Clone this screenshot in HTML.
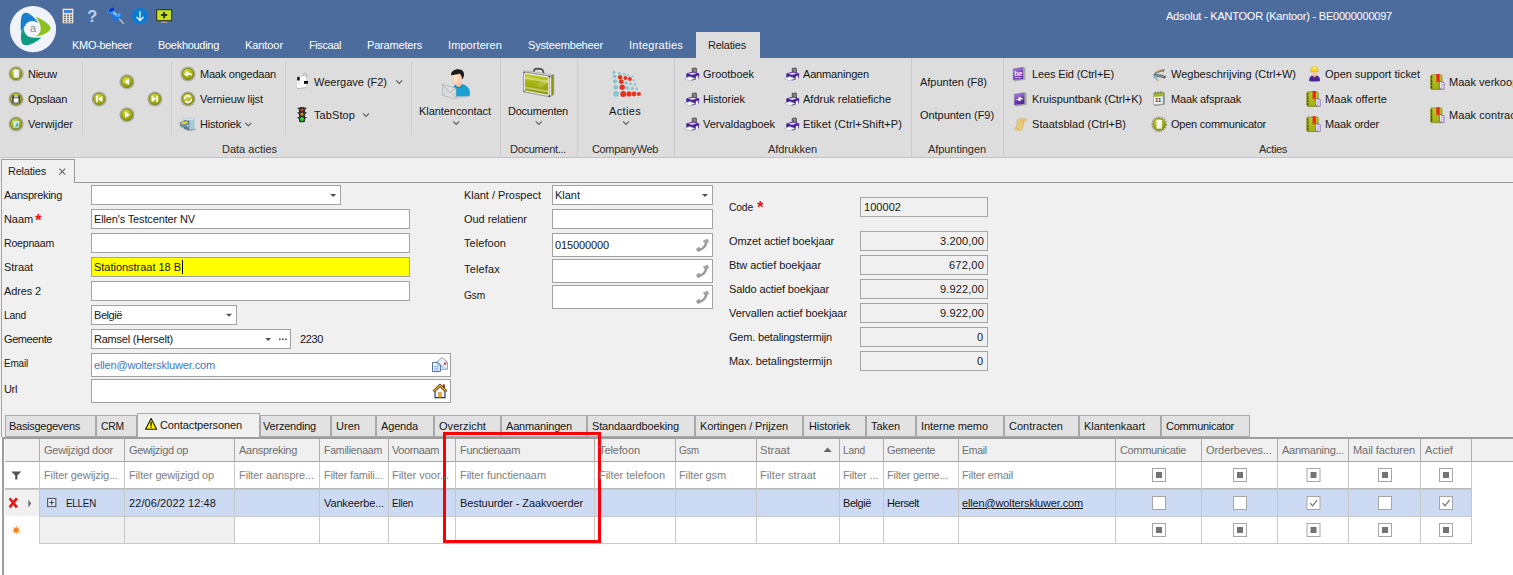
<!DOCTYPE html>
<html><head><meta charset="utf-8"><title>Adsolut</title>
<style>
html,body{margin:0;padding:0;}
body{width:1513px;height:575px;overflow:hidden;position:relative;background:#f0f0f0;font-family:"Liberation Sans", sans-serif;}
.a{position:absolute;}
.t{white-space:pre;}
svg{position:absolute;overflow:visible;}
</style></head><body>
<div class="a" style="left:0px;top:0px;width:1513px;height:58px;background:#4d6c9e;"></div>
<div class="a" style="left:0px;top:58px;width:1513px;height:100px;background:#dddddd;"></div>
<div class="a" style="left:0px;top:157px;width:1513px;height:1px;background:#c4c4c4;"></div>
<div class="a" style="left:696px;top:32px;width:64px;height:26px;background:#dddddd;"></div>
<div class="a" style="left:82px;top:62px;width:1px;height:73px;background:#cdcdcd;"></div>
<div class="a" style="left:171px;top:62px;width:1px;height:73px;background:#cdcdcd;"></div>
<div class="a" style="left:285px;top:62px;width:1px;height:73px;background:#cdcdcd;"></div>
<div class="a" style="left:411px;top:62px;width:1px;height:73px;background:#cdcdcd;"></div>
<div class="a" style="left:500px;top:58px;width:1px;height:99px;background:#cbcbcb;"></div>
<div class="a" style="left:577px;top:58px;width:1px;height:99px;background:#cbcbcb;"></div>
<div class="a" style="left:674px;top:58px;width:1px;height:99px;background:#cbcbcb;"></div>
<div class="a" style="left:911px;top:58px;width:1px;height:99px;background:#cbcbcb;"></div>
<div class="a" style="left:1003px;top:58px;width:1px;height:99px;background:#cbcbcb;"></div>
<div class="a" style="left:0px;top:158px;width:1513px;height:25px;background:#f0f0f0;"></div>
<div class="a" style="left:74px;top:182px;width:1439px;height:1px;background:#9c9c9c;"></div>
<div class="a" style="left:1px;top:159px;width:74px;height:24px;background:#f0f0f0;border:1px solid #9c9c9c;box-sizing:border-box;border-bottom:none;"></div>
<div class="a" style="left:1px;top:182px;width:1px;height:256px;background:#a6a6a6;"></div>
<svg width="10" height="10" style="left:58px;top:167px"><path d="M1.4,1.6 L7.2,7.6 M7.2,1.6 L1.4,7.6" stroke="#666" stroke-width="1.1" fill="none"/></svg>
<div class="a" style="left:91px;top:185px;width:250px;height:20px;background:#fff;border:1px solid #a2a2a2;box-sizing:border-box;"></div>
<div class="a" style="left:91px;top:209px;width:319px;height:20px;background:#fff;border:1px solid #a2a2a2;box-sizing:border-box;"></div>
<div class="a" style="left:91px;top:233px;width:319px;height:20px;background:#fff;border:1px solid #a2a2a2;box-sizing:border-box;"></div>
<div class="a" style="left:91px;top:257px;width:319px;height:20px;background:#ffff00;border:1px solid #a2a2a2;box-sizing:border-box;"></div>
<div class="a" style="left:91px;top:281px;width:319px;height:20px;background:#fff;border:1px solid #a2a2a2;box-sizing:border-box;"></div>
<div class="a" style="left:91px;top:305px;width:146px;height:20px;background:#fff;border:1px solid #a2a2a2;box-sizing:border-box;"></div>
<div class="a" style="left:91px;top:329px;width:200px;height:20px;background:#fff;border:1px solid #a2a2a2;box-sizing:border-box;"></div>
<div class="a" style="left:91px;top:353px;width:360px;height:24px;background:#fff;border:1px solid #a2a2a2;box-sizing:border-box;"></div>
<div class="a" style="left:91px;top:379px;width:360px;height:24px;background:#fff;border:1px solid #a2a2a2;box-sizing:border-box;"></div>
<div class="a" style="left:182px;top:260px;width:1px;height:14px;background:#000;"></div>
<div class="a" style="left:552px;top:185px;width:161px;height:20px;background:#fff;border:1px solid #a2a2a2;box-sizing:border-box;"></div>
<div class="a" style="left:552px;top:209px;width:161px;height:20px;background:#fff;border:1px solid #a2a2a2;box-sizing:border-box;"></div>
<div class="a" style="left:552px;top:233px;width:161px;height:24px;background:#fff;border:1px solid #a2a2a2;box-sizing:border-box;"></div>
<div class="a" style="left:552px;top:259px;width:161px;height:24px;background:#fff;border:1px solid #a2a2a2;box-sizing:border-box;"></div>
<div class="a" style="left:552px;top:285px;width:161px;height:24px;background:#fff;border:1px solid #a2a2a2;box-sizing:border-box;"></div>
<div class="a" style="left:860px;top:197px;width:128px;height:20px;background:#f0f0f0;border:1px solid #a5a5a5;box-sizing:border-box;"></div>
<div class="a" style="left:860px;top:231px;width:128px;height:20px;background:#f0f0f0;border:1px solid #a5a5a5;box-sizing:border-box;"></div>
<div class="a" style="left:860px;top:255px;width:128px;height:20px;background:#f0f0f0;border:1px solid #a5a5a5;box-sizing:border-box;"></div>
<div class="a" style="left:860px;top:279px;width:128px;height:20px;background:#f0f0f0;border:1px solid #a5a5a5;box-sizing:border-box;"></div>
<div class="a" style="left:860px;top:303px;width:128px;height:20px;background:#f0f0f0;border:1px solid #a5a5a5;box-sizing:border-box;"></div>
<div class="a" style="left:860px;top:327px;width:128px;height:20px;background:#f0f0f0;border:1px solid #a5a5a5;box-sizing:border-box;"></div>
<div class="a" style="left:860px;top:351px;width:128px;height:20px;background:#f0f0f0;border:1px solid #a5a5a5;box-sizing:border-box;"></div>
<div class="a" style="left:5px;top:415px;width:91px;height:22px;background:#e2e2e2;border:1px solid #a9a9a9;box-sizing:border-box;"></div>
<div class="a" style="left:96px;top:415px;width:41px;height:22px;background:#e2e2e2;border:1px solid #a9a9a9;box-sizing:border-box;"></div>
<div class="a" style="left:260px;top:415px;width:71px;height:22px;background:#e2e2e2;border:1px solid #a9a9a9;box-sizing:border-box;"></div>
<div class="a" style="left:331px;top:415px;width:45px;height:22px;background:#e2e2e2;border:1px solid #a9a9a9;box-sizing:border-box;"></div>
<div class="a" style="left:376px;top:415px;width:58px;height:22px;background:#e2e2e2;border:1px solid #a9a9a9;box-sizing:border-box;"></div>
<div class="a" style="left:434px;top:415px;width:67px;height:22px;background:#e2e2e2;border:1px solid #a9a9a9;box-sizing:border-box;"></div>
<div class="a" style="left:501px;top:415px;width:86px;height:22px;background:#e2e2e2;border:1px solid #a9a9a9;box-sizing:border-box;"></div>
<div class="a" style="left:587px;top:415px;width:108px;height:22px;background:#e2e2e2;border:1px solid #a9a9a9;box-sizing:border-box;"></div>
<div class="a" style="left:695px;top:415px;width:108px;height:22px;background:#e2e2e2;border:1px solid #a9a9a9;box-sizing:border-box;"></div>
<div class="a" style="left:803px;top:415px;width:63px;height:22px;background:#e2e2e2;border:1px solid #a9a9a9;box-sizing:border-box;"></div>
<div class="a" style="left:866px;top:415px;width:50px;height:22px;background:#e2e2e2;border:1px solid #a9a9a9;box-sizing:border-box;"></div>
<div class="a" style="left:916px;top:415px;width:88px;height:22px;background:#e2e2e2;border:1px solid #a9a9a9;box-sizing:border-box;"></div>
<div class="a" style="left:1004px;top:415px;width:75px;height:22px;background:#e2e2e2;border:1px solid #a9a9a9;box-sizing:border-box;"></div>
<div class="a" style="left:1079px;top:415px;width:82px;height:22px;background:#e2e2e2;border:1px solid #a9a9a9;box-sizing:border-box;"></div>
<div class="a" style="left:1161px;top:415px;width:89px;height:22px;background:#e2e2e2;border:1px solid #a9a9a9;box-sizing:border-box;"></div>
<div class="a" style="left:137px;top:413px;width:123px;height:24px;background:#f0f0f0;border:1px solid #a9a9a9;box-sizing:border-box;border-bottom:none;"></div>
<div class="a" style="left:0px;top:437px;width:1513px;height:138px;background:#ffffff;"></div>
<div class="a" style="left:2px;top:437px;width:1511px;height:2px;background:#9e9e9e;"></div>
<div class="a" style="left:2px;top:437px;width:2.4px;height:138px;background:#9e9e9e;"></div>
<div class="a" style="left:5px;top:439px;width:1508px;height:22px;background:#f0f0f0;"></div>
<div class="a" style="left:5px;top:489px;width:34px;height:27px;background:#f0f0f0;"></div>
<div class="a" style="left:39px;top:489px;width:1432px;height:27px;background:#cddaf4;"></div>
<div class="a" style="left:39px;top:517px;width:195px;height:26px;background:#f0f0f0;"></div>
<div class="a" style="left:5px;top:461px;width:1508px;height:1px;background:#a8a8a8;"></div>
<div class="a" style="left:5px;top:488px;width:1467px;height:1px;background:#b9b9b9;"></div>
<div class="a" style="left:5px;top:489px;width:1467px;height:1px;background:#c9c9c9;"></div>
<div class="a" style="left:39px;top:516px;width:1432px;height:1px;background:#c8c8c8;"></div>
<div class="a" style="left:39px;top:543px;width:1432px;height:1px;background:#c8c8c8;"></div>
<div class="a" style="left:39px;top:439px;width:1px;height:23px;background:#adadad;"></div>
<div class="a" style="left:39px;top:462px;width:1px;height:82px;background:#c8c8c8;"></div>
<div class="a" style="left:124px;top:439px;width:1px;height:23px;background:#adadad;"></div>
<div class="a" style="left:124px;top:462px;width:1px;height:82px;background:#c8c8c8;"></div>
<div class="a" style="left:234px;top:439px;width:1px;height:23px;background:#adadad;"></div>
<div class="a" style="left:234px;top:462px;width:1px;height:82px;background:#c8c8c8;"></div>
<div class="a" style="left:319px;top:439px;width:1px;height:23px;background:#adadad;"></div>
<div class="a" style="left:319px;top:462px;width:1px;height:82px;background:#c8c8c8;"></div>
<div class="a" style="left:388px;top:439px;width:1px;height:23px;background:#adadad;"></div>
<div class="a" style="left:388px;top:462px;width:1px;height:82px;background:#c8c8c8;"></div>
<div class="a" style="left:455px;top:439px;width:1px;height:23px;background:#adadad;"></div>
<div class="a" style="left:455px;top:462px;width:1px;height:82px;background:#c8c8c8;"></div>
<div class="a" style="left:594px;top:439px;width:1px;height:23px;background:#adadad;"></div>
<div class="a" style="left:594px;top:462px;width:1px;height:82px;background:#c8c8c8;"></div>
<div class="a" style="left:675px;top:439px;width:1px;height:23px;background:#adadad;"></div>
<div class="a" style="left:675px;top:462px;width:1px;height:82px;background:#c8c8c8;"></div>
<div class="a" style="left:756px;top:439px;width:1px;height:23px;background:#adadad;"></div>
<div class="a" style="left:756px;top:462px;width:1px;height:82px;background:#c8c8c8;"></div>
<div class="a" style="left:839px;top:439px;width:1px;height:23px;background:#adadad;"></div>
<div class="a" style="left:839px;top:462px;width:1px;height:82px;background:#c8c8c8;"></div>
<div class="a" style="left:883px;top:439px;width:1px;height:23px;background:#adadad;"></div>
<div class="a" style="left:883px;top:462px;width:1px;height:82px;background:#c8c8c8;"></div>
<div class="a" style="left:958px;top:439px;width:1px;height:23px;background:#adadad;"></div>
<div class="a" style="left:958px;top:462px;width:1px;height:82px;background:#c8c8c8;"></div>
<div class="a" style="left:1115px;top:439px;width:1px;height:23px;background:#adadad;"></div>
<div class="a" style="left:1115px;top:462px;width:1px;height:82px;background:#c8c8c8;"></div>
<div class="a" style="left:1201px;top:439px;width:1px;height:23px;background:#adadad;"></div>
<div class="a" style="left:1201px;top:462px;width:1px;height:82px;background:#c8c8c8;"></div>
<div class="a" style="left:1277px;top:439px;width:1px;height:23px;background:#adadad;"></div>
<div class="a" style="left:1277px;top:462px;width:1px;height:82px;background:#c8c8c8;"></div>
<div class="a" style="left:1348px;top:439px;width:1px;height:23px;background:#adadad;"></div>
<div class="a" style="left:1348px;top:462px;width:1px;height:82px;background:#c8c8c8;"></div>
<div class="a" style="left:1420px;top:439px;width:1px;height:23px;background:#adadad;"></div>
<div class="a" style="left:1420px;top:462px;width:1px;height:82px;background:#c8c8c8;"></div>
<div class="a" style="left:1471px;top:439px;width:1px;height:23px;background:#adadad;"></div>
<div class="a" style="left:1471px;top:462px;width:1px;height:82px;background:#c8c8c8;"></div>
<div class="a" style="left:443px;top:432px;width:158px;height:111px;background:transparent;border:3px solid #fa0008;box-sizing:border-box;"></div>
<svg width="1513" height="575" style="left:0;top:0"><defs>
<radialGradient id="ol" cx="40%" cy="30%" r="75%"><stop offset="0" stop-color="#d4dc3a"/><stop offset="0.55" stop-color="#a9b414"/><stop offset="1" stop-color="#7f8a0c"/></radialGradient>
<linearGradient id="pg" x1="0" y1="0" x2="1" y2="1"><stop offset="0" stop-color="#ffffff"/><stop offset="1" stop-color="#dfe6f5"/></linearGradient>
<linearGradient id="bk" x1="0" y1="0" x2="0" y2="1"><stop offset="0" stop-color="#bccb24"/><stop offset="1" stop-color="#9fae14"/></linearGradient>
<linearGradient id="pu" x1="0" y1="0" x2="1" y2="1"><stop offset="0" stop-color="#8a4fd0"/><stop offset="1" stop-color="#4f1f94"/></linearGradient>
<linearGradient id="bc" x1="0" y1="0" x2="0" y2="1"><stop offset="0" stop-color="#c3cf2a"/><stop offset="0.5" stop-color="#a4b012"/><stop offset="1" stop-color="#8d990c"/></linearGradient>
</defs><circle cx="33" cy="29.1" r="23.1" fill="#f0f3fa"/>
<path d="M20.9,31.4 C20.6,25 20.6,18.6 21.9,15.4 C22.9,13 25,12.3 27,12.8 C31,14.2 35.6,18.6 38.2,22.9 C36.4,21.6 34.6,20.9 32.6,20.9 C28.4,21 25.6,23.6 24,27.4 C23,29 22,30.4 20.9,31.4 Z" fill="#177fcb"/>
<path d="M35.6,16.8 C40.8,18.6 47.4,22.6 50,26.2 C51,27.6 50.8,29.4 49.4,30.8 C46.4,33.6 41,35.8 35.7,36.7 C38.6,35 40.6,32.2 40.7,28.8 C40.8,25.4 39.6,23 38.4,21.2 C37.6,19.6 36.6,18 35.6,16.8 Z" fill="#8dc11f"/>
<path d="M24.1,27.8 C23.6,31.8 25.6,35.4 29.2,36.8 C32.6,38 37.4,37.9 41.6,37.4 C37.4,41 31.6,44.4 26.8,45.2 C24.4,45.5 22.4,44.4 21.6,42 C20.6,38.6 20.8,34 21.4,31.6 C22.4,30.4 23.4,29.2 24.1,27.8 Z" fill="#0c9a80"/>
<text x="33" y="32" font-size="11" fill="#8c8c8c" text-anchor="middle" font-family="Liberation Sans, sans-serif">a</text><rect x="62.5" y="8.5" width="11" height="15" rx="1" fill="#e6e6e2" stroke="#8c8c8c"/>
<rect x="64" y="10" width="8" height="3" fill="#3f82e0"/><rect x="64" y="14.5" width="2" height="1.3" fill="#6e6e6e"/><rect x="67" y="14.5" width="2" height="1.3" fill="#6e6e6e"/><rect x="70" y="14.5" width="2" height="1.3" fill="#e03a2a"/><rect x="64" y="16.7" width="2" height="1.3" fill="#6e6e6e"/><rect x="67" y="16.7" width="2" height="1.3" fill="#6e6e6e"/><rect x="70" y="16.7" width="2" height="1.3" fill="#6e6e6e"/><rect x="64" y="18.9" width="2" height="1.3" fill="#6e6e6e"/><rect x="67" y="18.9" width="2" height="1.3" fill="#6e6e6e"/><rect x="70" y="18.9" width="2" height="1.3" fill="#6e6e6e"/><rect x="64" y="21.1" width="2" height="1.3" fill="#6e6e6e"/><rect x="67" y="21.1" width="2" height="1.3" fill="#6e6e6e"/><rect x="70" y="21.1" width="2" height="1.3" fill="#6e6e6e"/><text x="92.3" y="21.6" font-size="16.5" font-weight="bold" fill="#b3d3f8" text-anchor="middle" font-family="Liberation Sans, sans-serif">?</text><line x1="118.8" y1="18.2" x2="123.7" y2="23.7" stroke="#c4c4c4" stroke-width="1.3"/>
<ellipse cx="116.7" cy="16.8" rx="4.7" ry="3" fill="#1274ec" transform="rotate(-35 116.7 16.8)"/>
<ellipse cx="118.4" cy="15.2" rx="2.4" ry="1.6" fill="#4fb0ff" transform="rotate(-35 118.4 15.2)"/>
<path d="M110.2,12.4 L112.8,9.6 L118.2,14.6 L115.4,17.2 Z" fill="#2a8cf8"/>
<line x1="113" y1="11.6" x2="116.4" y2="15" stroke="#d6ecff" stroke-width="1.1"/>
<ellipse cx="111.1" cy="10.6" rx="3.6" ry="2.5" fill="#2f8ef6" transform="rotate(-33 111.1 10.6)"/>
<ellipse cx="111.5" cy="9.8" rx="3" ry="1.7" fill="#0d37c4" transform="rotate(-33 111.5 9.8)"/><circle cx="140" cy="16" r="8.1" fill="#0b7bd3"/>
<path d="M140,11.2 V20.4 M136.4,16.9 L140,20.6 L143.6,16.9" fill="none" stroke="#fff" stroke-width="1.25"/><rect x="156.6" y="9.6" width="15" height="11" fill="#c4e31d" stroke="#3a3f16" stroke-width="1.2"/>
<path d="M164.1,12 V18.2 M161,15.1 H167.2" stroke="#2e3210" stroke-width="2"/>
<rect x="161" y="21.6" width="6.4" height="1.4" fill="#9d9d9d"/><g transform="translate(16.1,73.8)"><circle r="7.8" fill="#c9c9c4"/><circle r="7.3" fill="#a4a49c"/><circle r="6.6" fill="#c3c3ba"/><circle r="5.8" fill="url(#ol)" stroke="#77810c" stroke-width="0.8"/><path d="M-2.4,-4.2 H2.8 V4 H-2.4 Z" fill="url(#pg)"/></g><g transform="translate(16.1,99.2)"><circle r="7.8" fill="#c9c9c4"/><circle r="7.3" fill="#a4a49c"/><circle r="6.6" fill="#c3c3ba"/><circle r="5.8" fill="url(#ol)" stroke="#77810c" stroke-width="0.8"/><rect x="-4" y="-4" width="8" height="8" rx="0.8" fill="#4a4a42"/><rect x="-2.4" y="-1" width="4.8" height="4.4" fill="#f4f4f4"/><rect x="-2" y="-4" width="4" height="2.2" fill="#cfcfcf"/></g><g transform="translate(16.1,124)"><circle r="7.8" fill="#c9c9c4"/><circle r="7.3" fill="#a4a49c"/><circle r="6.6" fill="#c3c3ba"/><circle r="5.8" fill="url(#ol)" stroke="#77810c" stroke-width="0.8"/><path d="M-3.2,-3 H3.2 L2.4,3.8 H-2.4 Z" fill="#cfe8f8" stroke="#8fc0e0" stroke-width="0.5"/><path d="M-0.6,2.4 L1.2,-0.6 L1.8,2 Z M0,0 L1.6,-1.4" fill="#3bb04a" stroke="#3bb04a" stroke-width="0.5"/></g><g transform="translate(127,81.8)"><circle r="7.8" fill="#c9c9c4"/><circle r="7.3" fill="#a4a49c"/><circle r="6.6" fill="#c3c3ba"/><circle r="5.8" fill="url(#ol)" stroke="#77810c" stroke-width="0.8"/><path d="M2,-3.2 V3.2 L-3,0 Z" fill="#fff"/></g><g transform="translate(99.2,99)"><circle r="7.8" fill="#c9c9c4"/><circle r="7.3" fill="#a4a49c"/><circle r="6.6" fill="#c3c3ba"/><circle r="5.8" fill="url(#ol)" stroke="#77810c" stroke-width="0.8"/><path d="M3.2,-3.2 V3.2 L-1.2,0 Z M-3.2,-3.2 H-1.4 V3.2 H-3.2 Z" fill="#fff"/></g><g transform="translate(154.9,99)"><circle r="7.8" fill="#c9c9c4"/><circle r="7.3" fill="#a4a49c"/><circle r="6.6" fill="#c3c3ba"/><circle r="5.8" fill="url(#ol)" stroke="#77810c" stroke-width="0.8"/><path d="M-3.2,-3.2 V3.2 L1.2,0 Z M3.2,-3.2 H1.4 V3.2 H3.2 Z" fill="#fff"/></g><g transform="translate(127,114.8)"><circle r="7.8" fill="#c9c9c4"/><circle r="7.3" fill="#a4a49c"/><circle r="6.6" fill="#c3c3ba"/><circle r="5.8" fill="url(#ol)" stroke="#77810c" stroke-width="0.8"/><path d="M-2,-3.2 V3.2 L3,0 Z" fill="#fff"/></g><g transform="translate(188,74)"><circle r="7.8" fill="#c9c9c4"/><circle r="7.3" fill="#a4a49c"/><circle r="6.6" fill="#c3c3ba"/><circle r="5.8" fill="url(#ol)" stroke="#77810c" stroke-width="0.8"/><path d="M-4,0.4 L-1,-3.2 L-0.6,-1.4 C2.4,-1.8 4.2,-0.2 4.2,2.2 C3,0.8 1.6,0.6 -0.4,0.8 L0,2.6 Z" fill="#fff"/></g><g transform="translate(188,99)"><circle r="7.8" fill="#c9c9c4"/><circle r="7.3" fill="#a4a49c"/><circle r="6.6" fill="#c3c3ba"/><circle r="5.8" fill="url(#ol)" stroke="#77810c" stroke-width="0.8"/><path d="M-3.4,0.4 A3.4,3.4 0 0 1 1.6,-3" fill="none" stroke="#fff" stroke-width="1.5"/><path d="M0.6,-4.6 L3.6,-2.4 L0.4,-1 Z" fill="#fff"/><path d="M3.4,-0.4 A3.4,3.4 0 0 1 -1.6,3" fill="none" stroke="#fff" stroke-width="1.5"/><path d="M-0.6,4.6 L-3.6,2.4 L-0.4,1 Z" fill="#fff"/></g><g transform="translate(176,112)">
<path d="M7.6,6.8 L12.4,6 L18.6,6.8 L18.6,8 L13.4,8.8 L7.6,8 Z" fill="#cfe5ec" stroke="#9fbfcb" stroke-width="0.4"/>
<path d="M13.4,8.6 L18.6,7.6 L18.6,17 L13.4,18.2 Z" fill="#a6c9d6"/>
<path d="M7.6,8 L13.4,8.8 L13.4,18.2 L7.6,16.4 Z" fill="#5d7e8e"/>
<path d="M4.2,10.2 L11,9.4 L12.6,10.6 L12.6,14.4 L5.8,15.2 L4.2,14 Z" fill="#86a7b6" stroke="#4c6c7b" stroke-width="0.5"/>
<path d="M5.6,9.9 L10.9,9.3 L11.5,11.5 L6.2,12.1 Z" fill="#f3d936" stroke="#c7ab1c" stroke-width="0.3"/>
<path d="M5.8,12.4 L12.6,11.6 L12.6,14.4 L5.8,15.2 Z" fill="#6f909f"/>
<rect x="11" y="13.2" width="1.6" height="1.3" fill="#e9f1f5"/>
<path d="M8.4,17 L13.4,18.6 L19.6,17.2" fill="none" stroke="#6a7a82" stroke-width="0.7"/>
</g><g transform="translate(292,70)">
<path d="M10.8,6.4 C10.4,3.4 12.6,2.6 14.2,3.4 C15.2,4 15.2,5.4 15,7.4 Z" fill="#d0d0d0" stroke="#a8a8a8" stroke-width="0.6"/>
<path d="M5,7.2 L13,5.8 L14.6,7.2 L14.6,11 L16.4,10.8 L16.4,14.4 L14.4,14.8 L14,17.6 L6,18.6 L4.4,17.6 Z" fill="#fcfcfc" stroke="#c6c6c6" stroke-width="0.5"/>
<path d="M4.4,17.6 L6,18.6 L14,17.6" fill="none" stroke="#a9a9a9" stroke-width="0.7"/>
<ellipse cx="6.5" cy="8.8" rx="1.5" ry="2" fill="#0e0e0e"/>
<path d="M7.2,7 C8.2,7.6 8.2,10 7.2,10.6 Z" fill="#1f9a2e"/>
<rect x="12" y="11" width="4" height="2.8" fill="#090909"/>
<path d="M7.4,12 V14" stroke="#c9c9c9" stroke-width="0.6"/>
</g><g transform="translate(302,114.5)">
<path d="M-5,-6.8 L-2.6,-6.8 L-2.6,-4.2 Z M5,-6.8 L2.6,-6.8 L2.6,-4.2 Z M-5,-2.2 L-2.6,-2.2 L-2.6,0.4 Z M5,-2.2 L2.6,-2.2 L2.6,0.4 Z M-5,2.4 L-2.6,2.4 L-2.6,5 Z M5,2.4 L2.6,2.4 L2.6,5 Z" fill="#2c2c2c"/>
<rect x="-3" y="-7.6" width="6" height="15.4" rx="1.6" fill="#303030"/>
<circle cx="0" cy="-4.6" r="1.45" fill="#cf3a1c"/><circle cx="0" cy="-0.2" r="1.45" fill="#dc8f0f"/><circle cx="0" cy="4.5" r="1.9" fill="#21e626"/>
</g><path d="M245.3,122.8 L248.3,125.89999999999999 L251.3,122.8" fill="none" stroke="#5f5f5f" stroke-width="1.2"/><path d="M396.2,80.3 L399.2,83.39999999999999 L402.2,80.3" fill="none" stroke="#5f5f5f" stroke-width="1.2"/><path d="M363,113.3 L366,116.39999999999999 L369,113.3" fill="none" stroke="#5f5f5f" stroke-width="1.2"/><path d="M453.2,121.3 L456.2,124.39999999999999 L459.2,121.3" fill="none" stroke="#5f5f5f" stroke-width="1.2"/><path d="M535.8,121.3 L538.8,124.39999999999999 L541.8,121.3" fill="none" stroke="#5f5f5f" stroke-width="1.2"/><path d="M623,121.3 L626,124.39999999999999 L629,121.3" fill="none" stroke="#5f5f5f" stroke-width="1.2"/><g transform="translate(436,64)">
<ellipse cx="24" cy="32.6" rx="10" ry="1.1" fill="#c3c7ca"/>
<path d="M15,32.2 C14.8,26 17,22 20,20.8 L26.4,20.2 C31,21 34.2,24.6 34,30 C34,31.4 33,32.2 31,32.3 Z" fill="#1aa1d2"/>
<path d="M19.4,20.6 C20.4,23.8 24.6,24 26.2,20.2 L25,17.4 L20,17.4 Z" fill="#f2bc96"/>
<path d="M19,20.9 C20.2,24.8 25.2,24.8 26.6,20.4" fill="none" stroke="#1b6e8c" stroke-width="0.8"/>
<ellipse cx="20.9" cy="14.8" rx="4.9" ry="5.8" fill="#f9cdae"/>
<ellipse cx="19.6" cy="14" rx="2.4" ry="3.8" fill="#fde0ca"/>
<path d="M15.2,11.2 C14.6,7.6 18,5.2 22.2,5.2 C26.6,5.2 28.6,8 27.9,11.8 C27.6,13.6 26.8,15 25.9,15.4 C26.2,13 25.4,10.8 23.4,9.4 C21,10.4 17.8,10.8 15.2,11.2 Z" fill="#1b1b1b"/>
<path d="M6.6,20.4 L20,24 L20,34.8 L6.6,31.4 Z" fill="#dcdee0" stroke="#a2a6aa" stroke-width="0.6"/>
<path d="M6.6,20.4 L13.8,28.6 L20,24" fill="none" stroke="#9ea2a6" stroke-width="0.7"/>
<path d="M6.6,31.4 L12,26.6 M20,34.8 L15.4,27.6" fill="none" stroke="#b4b8bc" stroke-width="0.6"/>
</g><g transform="translate(518,64)">
<path d="M15.6,9 C15.6,5.6 17,4.7 19,4.7 L22.4,4.9 C24.6,5.1 25.4,6.8 25.6,9.6" fill="none" stroke="#4c4c4c" stroke-width="1.7"/>
<path d="M5.6,7.9 L9.6,6.8 L35.7,10.9 L31.7,12.2 Z" fill="#dedede" stroke="#8a8a8a" stroke-width="0.5"/>
<path d="M31.7,12.2 L35.7,10.9 L35.7,30.4 L31.7,32.7 Z" fill="#8b970c" stroke="#7e7e7e" stroke-width="0.6"/>
<path d="M5.6,7.9 L31.7,12.2 L31.7,32.7 L5.6,27.8 Z" fill="#f0f0f0" stroke="#7e7e7e" stroke-width="0.8"/>
<path d="M7,9.8 L30.2,13.6 L30.2,30.8 L7,26.4 Z" fill="url(#bc)"/>
<path d="M7,12.8 L30.2,16.8 L30.2,18.8 L7,14.8 Z M7,22.4 L30.2,26.6 L30.2,28.6 L7,24.4 Z" fill="#ffffff" fill-opacity="0.38"/>
<path d="M18,20 L30.2,15 L30.2,18 L22,24 Z" fill="#ffffff" fill-opacity="0.18"/>
<path d="M31.7,12.2 L33.2,11.7 L33.2,31.9 L31.7,32.7 Z" fill="#e6e6e6"/>
<circle cx="31.5" cy="12.7" r="0.9" fill="#333"/><circle cx="31.5" cy="32" r="0.9" fill="#333"/><circle cx="6.1" cy="8.5" r="0.7" fill="#444"/><circle cx="6.1" cy="27.3" r="0.7" fill="#444"/>
</g><circle cx="613.8" cy="72.3" r="1.6" fill="#86c5d0"/><circle cx="619.3" cy="73.4" r="1.4" fill="#86c5d0"/><circle cx="624.3" cy="74.3" r="1.2" fill="#86c5d0"/><circle cx="628.2" cy="75.4" r="1.1" fill="#86c5d0"/><circle cx="632.3" cy="76.3" r="1.0" fill="#86c5d0"/><circle cx="614.6" cy="76.5" r="1.8" fill="#86c5d0"/><circle cx="620.1" cy="77.3" r="2.2" fill="#e8321f"/><circle cx="625.4" cy="78" r="2.0" fill="#e8321f"/><circle cx="629.9" cy="79.1" r="2.0" fill="#e8321f"/><circle cx="633.7" cy="80.3" r="1.1" fill="#86c5d0"/><circle cx="615.1" cy="81.3" r="2.1" fill="#86c5d0"/><circle cx="621.3" cy="81.6" r="2.4" fill="#e8321f"/><circle cx="626" cy="83" r="1.7" fill="#86c5d0"/><circle cx="630.5" cy="83.7" r="1.5" fill="#86c5d0"/><circle cx="635.1" cy="84.5" r="1.3" fill="#86c5d0"/><circle cx="615.7" cy="87.3" r="2.4" fill="#86c5d0"/><circle cx="622.2" cy="87.3" r="2.7" fill="#e8321f"/><circle cx="627.3" cy="87.9" r="1.9" fill="#86c5d0"/><circle cx="632.3" cy="88.4" r="1.6" fill="#86c5d0"/><circle cx="636.7" cy="89" r="1.4" fill="#86c5d0"/><circle cx="616.1" cy="93.9" r="2.8" fill="#86c5d0"/><circle cx="623.2" cy="93.9" r="3.0" fill="#e8321f"/><circle cx="629" cy="93.9" r="2.6" fill="#e8321f"/><circle cx="634" cy="94" r="2.4" fill="#e8321f"/><circle cx="638.9" cy="94" r="2.1" fill="#e8321f"/><g transform="translate(683.8,68)">
<path d="M8.4,0.4 L12.4,0 L12.6,5 L8.6,5.6 Z" fill="#a9a9a9" stroke="#2e2e2e" stroke-width="0.8"/><path d="M9.7,1.4 V4.6 M11.1,1.2 V4.4" stroke="#444" stroke-width="0.6"/>
<path d="M2.6,5.4 L9.4,3.8 L15.4,5.6 L15.2,10.2 L8.6,12.6 L2.4,10.2 Z" fill="#43208e"/>
<path d="M2.6,5.4 L9.4,3.8 L15.4,5.6 L8.8,7.6 Z" fill="#6a3fb8"/>
<path d="M4.6,5.8 L9.6,4.8 L12.6,5.6 L8.2,6.8 Z" fill="#efefef"/>
<path d="M0.4,10.4 L6,8.6 L11.4,10.6 L5.6,12.8 Z" fill="#f6f8f8" stroke="#9fb0b0" stroke-width="0.6"/>
<path d="M12,8.2 L14.4,7.4 L14.4,11 L12,11.8 Z" fill="#f1f1f1"/>
</g><g transform="translate(783.8,68)">
<path d="M8.4,0.4 L12.4,0 L12.6,5 L8.6,5.6 Z" fill="#a9a9a9" stroke="#2e2e2e" stroke-width="0.8"/><path d="M9.7,1.4 V4.6 M11.1,1.2 V4.4" stroke="#444" stroke-width="0.6"/>
<path d="M2.6,5.4 L9.4,3.8 L15.4,5.6 L15.2,10.2 L8.6,12.6 L2.4,10.2 Z" fill="#43208e"/>
<path d="M2.6,5.4 L9.4,3.8 L15.4,5.6 L8.8,7.6 Z" fill="#6a3fb8"/>
<path d="M4.6,5.8 L9.6,4.8 L12.6,5.6 L8.2,6.8 Z" fill="#efefef"/>
<path d="M0.4,10.4 L6,8.6 L11.4,10.6 L5.6,12.8 Z" fill="#f6f8f8" stroke="#9fb0b0" stroke-width="0.6"/>
<path d="M12,8.2 L14.4,7.4 L14.4,11 L12,11.8 Z" fill="#f1f1f1"/>
</g><g transform="translate(683.8,93)">
<path d="M8.4,0.4 L12.4,0 L12.6,5 L8.6,5.6 Z" fill="#a9a9a9" stroke="#2e2e2e" stroke-width="0.8"/><path d="M9.7,1.4 V4.6 M11.1,1.2 V4.4" stroke="#444" stroke-width="0.6"/>
<path d="M2.6,5.4 L9.4,3.8 L15.4,5.6 L15.2,10.2 L8.6,12.6 L2.4,10.2 Z" fill="#43208e"/>
<path d="M2.6,5.4 L9.4,3.8 L15.4,5.6 L8.8,7.6 Z" fill="#6a3fb8"/>
<path d="M4.6,5.8 L9.6,4.8 L12.6,5.6 L8.2,6.8 Z" fill="#efefef"/>
<path d="M0.4,10.4 L6,8.6 L11.4,10.6 L5.6,12.8 Z" fill="#f6f8f8" stroke="#9fb0b0" stroke-width="0.6"/>
<path d="M12,8.2 L14.4,7.4 L14.4,11 L12,11.8 Z" fill="#f1f1f1"/>
</g><g transform="translate(783.8,93)">
<path d="M8.4,0.4 L12.4,0 L12.6,5 L8.6,5.6 Z" fill="#a9a9a9" stroke="#2e2e2e" stroke-width="0.8"/><path d="M9.7,1.4 V4.6 M11.1,1.2 V4.4" stroke="#444" stroke-width="0.6"/>
<path d="M2.6,5.4 L9.4,3.8 L15.4,5.6 L15.2,10.2 L8.6,12.6 L2.4,10.2 Z" fill="#43208e"/>
<path d="M2.6,5.4 L9.4,3.8 L15.4,5.6 L8.8,7.6 Z" fill="#6a3fb8"/>
<path d="M4.6,5.8 L9.6,4.8 L12.6,5.6 L8.2,6.8 Z" fill="#efefef"/>
<path d="M0.4,10.4 L6,8.6 L11.4,10.6 L5.6,12.8 Z" fill="#f6f8f8" stroke="#9fb0b0" stroke-width="0.6"/>
<path d="M12,8.2 L14.4,7.4 L14.4,11 L12,11.8 Z" fill="#f1f1f1"/>
</g><g transform="translate(683.8,118)">
<path d="M8.4,0.4 L12.4,0 L12.6,5 L8.6,5.6 Z" fill="#a9a9a9" stroke="#2e2e2e" stroke-width="0.8"/><path d="M9.7,1.4 V4.6 M11.1,1.2 V4.4" stroke="#444" stroke-width="0.6"/>
<path d="M2.6,5.4 L9.4,3.8 L15.4,5.6 L15.2,10.2 L8.6,12.6 L2.4,10.2 Z" fill="#43208e"/>
<path d="M2.6,5.4 L9.4,3.8 L15.4,5.6 L8.8,7.6 Z" fill="#6a3fb8"/>
<path d="M4.6,5.8 L9.6,4.8 L12.6,5.6 L8.2,6.8 Z" fill="#efefef"/>
<path d="M0.4,10.4 L6,8.6 L11.4,10.6 L5.6,12.8 Z" fill="#f6f8f8" stroke="#9fb0b0" stroke-width="0.6"/>
<path d="M12,8.2 L14.4,7.4 L14.4,11 L12,11.8 Z" fill="#f1f1f1"/>
</g><g transform="translate(783.8,118)">
<path d="M8.4,0.4 L12.4,0 L12.6,5 L8.6,5.6 Z" fill="#a9a9a9" stroke="#2e2e2e" stroke-width="0.8"/><path d="M9.7,1.4 V4.6 M11.1,1.2 V4.4" stroke="#444" stroke-width="0.6"/>
<path d="M2.6,5.4 L9.4,3.8 L15.4,5.6 L15.2,10.2 L8.6,12.6 L2.4,10.2 Z" fill="#43208e"/>
<path d="M2.6,5.4 L9.4,3.8 L15.4,5.6 L8.8,7.6 Z" fill="#6a3fb8"/>
<path d="M4.6,5.8 L9.6,4.8 L12.6,5.6 L8.2,6.8 Z" fill="#efefef"/>
<path d="M0.4,10.4 L6,8.6 L11.4,10.6 L5.6,12.8 Z" fill="#f6f8f8" stroke="#9fb0b0" stroke-width="0.6"/>
<path d="M12,8.2 L14.4,7.4 L14.4,11 L12,11.8 Z" fill="#f1f1f1"/>
</g><g transform="translate(1012.5,66.6)">
<path d="M0.2,1.8 L10.6,0.1 L12.9,1.3 L12.9,13.2 L2.6,14.8 L0.2,13.4 Z" fill="#a5ada6"/>
<path d="M0.9,2.3 L10.6,0.9 L10.6,12.3 L0.9,13.1 Z" fill="url(#pu)"/>
<path d="M0.9,2.3 L10.6,0.9 L10.6,4.6 L0.9,6 Z" fill="#fff" fill-opacity="0.2"/>
<text x="5.7" y="9.9" font-size="7.6" font-weight="bold" fill="#fff" text-anchor="middle" font-family="Liberation Sans, sans-serif" letter-spacing="-0.4">be</text>
<path d="M2.4,11.1 H9.2" stroke="#fff" stroke-width="0.8"/>
</g><g transform="translate(1013.6,92)">
<path d="M0.2,1.8 L10.8,0.1 L13.1,1.3 L13.1,13 L2.6,14.5 L0.2,13.2 Z" fill="#a5ada6"/>
<path d="M0.9,2.3 L10.8,0.9 L10.8,12.1 L0.9,12.9 Z" fill="url(#pu)"/>
<path d="M0.9,2.3 L10.8,0.9 L10.8,4.6 L0.9,6 Z" fill="#fff" fill-opacity="0.2"/>
<path d="M2.2,6.9 H4.6 V5.2 H7.4 V6.1 H9.4 V7.3 H7.4 V8.8 H4.6 V7.7 H2.2 Z" fill="#fff"/>
</g><g transform="translate(1013.8,118)">
<path d="M3.6,1.7 C6,0.5 10,0.2 12.4,1.2 C13.3,1.8 13,3 11.8,3.2 L10.3,3.2 L8.7,10.6 C8.3,12 6.4,12.6 4.4,12.4 C2.6,12.2 0.8,11.6 0.4,10.4 C0.6,9.6 1.6,9.4 2.7,9.6 Z" fill="#edcb7e" stroke="#c6a24e" stroke-width="0.5"/>
<path d="M10.3,3.2 C9.2,3.1 8.4,2.6 8,1.8" fill="none" stroke="#c6a24e" stroke-width="0.5"/>
<path d="M2.7,9.6 C3.8,10 4.4,10.8 4.4,12.3" fill="none" stroke="#c6a24e" stroke-width="0.5"/>
<path d="M5.2,3.4 L8.8,3.4 M4.8,5.4 L8.4,5.4 M4.4,7.4 L8,7.4" stroke="#d9b866" stroke-width="0.5"/>
</g><g>
<path d="M1164,70.4 C1158.6,70.8 1154.6,73.2 1154.2,76.2" fill="none" stroke="#7a8084" stroke-width="2.4"/>
<path d="M1154.2,76 C1158,75.2 1162,75.8 1165.4,77.6" fill="none" stroke="#5a5f63" stroke-width="2.6"/>
<path d="M1155,76 C1158,75.4 1162,76 1165,77.4" fill="none" stroke="#c9cdd0" stroke-width="0.6"/>
<path d="M1163.4,69.6 C1160.6,69.8 1158.4,70.6 1156.6,72.2" fill="none" stroke="#e9a63a" stroke-width="1"/>
<circle cx="1155.4" cy="77.2" r="1.7" fill="#78bdea"/>
<path d="M1155.6,78.4 L1158.2,80.8" stroke="#c79044" stroke-width="1.1"/>
<path d="M1163,70.8 L1164.6,69.6 M1164,77 L1165.6,76.4" stroke="#33383c" stroke-width="0.8"/>
</g><g transform="translate(1153,91.3)">
<path d="M0.6,1.6 L10,0.4 L11.8,1.6 L11.8,13.4 L2.4,14.8 L0.6,13.4 Z" fill="#8f958f"/>
<path d="M0.6,1.6 L10,0.6 L10,12.6 L0.6,13.4 Z" fill="#f7f7f3" stroke="#8a8f8a" stroke-width="0.5"/>
<path d="M0.8,1.8 L9.8,0.8 L9.8,5 L0.8,5.8 Z" fill="#9cb232"/>
<path d="M2.4,0.2 V2.6 M5.2,0 V2.4 M8,0 V2.2" stroke="#566" stroke-width="0.8"/>
<text x="5.2" y="11.2" font-size="6" font-weight="bold" fill="#222" text-anchor="middle" font-family="Liberation Sans, sans-serif">11</text>
</g><g transform="translate(1159.2,124.3)"><circle r="7.3" fill="none" stroke="#8a8f7a" stroke-width="1.1" stroke-dasharray="1.6 1.2"/><circle r="6.2" fill="url(#ol)" stroke="#77810c" stroke-width="0.8"/><path d="M-2.6,-4.4 H2.8 V4.4 H-2.6 Z" fill="url(#pg)"/></g><g transform="translate(1308.5,66)">
<path d="M0.6,15 C0.4,11.6 2,9.8 4,9.4 L8,9.4 C10,9.8 11.8,11.6 11.6,15 C8.2,15.8 3.8,15.8 0.6,15 Z" fill="#4c2496"/>
<path d="M4,9.4 L6,11.4 L8,9.4 Z" fill="#f0c8a4"/>
<ellipse cx="6" cy="7" rx="2.6" ry="3" fill="#f4c9a2"/>
<path d="M2.2,5 C2.2,1.8 3.8,0.4 6,0.4 C8.2,0.4 9.6,1.8 9.6,5 L10.4,5.6 L1.4,5.6 Z" fill="#f7d41e" stroke="#c9a40e" stroke-width="0.4"/>
<path d="M4.6,1 C5.4,0.6 6.6,0.6 7.4,1 L7.2,3.8 L4.8,3.8 Z" fill="#fbe56a"/>
</g><g transform="translate(1306.4,91)">
<rect x="0.4" y="0.8" width="11.4" height="14.6" rx="1.4" fill="url(#bk)" stroke="#75800e" stroke-width="0.7"/>
<path d="M1.5,2 V14.4" stroke="#3c4014" stroke-width="1.1" stroke-dasharray="2.6 0.7"/>
<path d="M6.2,0 H9.4 V8.6 L7.8,7.4 L6.2,8.6 Z" fill="#ee2222"/>
<path d="M9.2,7.6 L13.8,8.4 L13.8,15.4 L9.2,14.6 Z" fill="#f5f2fb" stroke="#6d45ad" stroke-width="0.7"/>
<path d="M10.6,10 L12.6,10.4 M10.6,11.8 L12.6,12.2 M10.6,13.4 L12,13.7" stroke="#7a52b6" stroke-width="0.6"/>
</g><g transform="translate(1306.4,116.2)">
<rect x="0.4" y="0.8" width="11.4" height="14.6" rx="1.4" fill="url(#bk)" stroke="#75800e" stroke-width="0.7"/>
<path d="M1.5,2 V14.4" stroke="#3c4014" stroke-width="1.1" stroke-dasharray="2.6 0.7"/>
<path d="M6.2,0 H9.4 V8.6 L7.8,7.4 L6.2,8.6 Z" fill="#ee2222"/>
<path d="M9.2,7.6 L13.8,8.4 L13.8,15.4 L9.2,14.6 Z" fill="#f5f2fb" stroke="#6d45ad" stroke-width="0.7"/>
<path d="M10.6,10 L12.6,10.4 M10.6,11.8 L12.6,12.2 M10.6,13.4 L12,13.7" stroke="#7a52b6" stroke-width="0.6"/>
</g><g transform="translate(1430.2,74)">
<rect x="0.4" y="0.8" width="11.4" height="14.6" rx="1.4" fill="url(#bk)" stroke="#75800e" stroke-width="0.7"/>
<path d="M1.5,2 V14.4" stroke="#3c4014" stroke-width="1.1" stroke-dasharray="2.6 0.7"/>
<path d="M6.2,0 H9.4 V8.6 L7.8,7.4 L6.2,8.6 Z" fill="#ee2222"/>
<path d="M9.2,7.6 L13.8,8.4 L13.8,15.4 L9.2,14.6 Z" fill="#f5f2fb" stroke="#6d45ad" stroke-width="0.7"/>
<path d="M10.6,10 L12.6,10.4 M10.6,11.8 L12.6,12.2 M10.6,13.4 L12,13.7" stroke="#7a52b6" stroke-width="0.6"/>
</g><g transform="translate(1430.2,107.2)">
<rect x="0.4" y="0.8" width="11.4" height="14.6" rx="1.4" fill="url(#bk)" stroke="#75800e" stroke-width="0.7"/>
<path d="M1.5,2 V14.4" stroke="#3c4014" stroke-width="1.1" stroke-dasharray="2.6 0.7"/>
<path d="M6.2,0 H9.4 V8.6 L7.8,7.4 L6.2,8.6 Z" fill="#ee2222"/>
<path d="M9.2,7.6 L13.8,8.4 L13.8,15.4 L9.2,14.6 Z" fill="#f5f2fb" stroke="#6d45ad" stroke-width="0.7"/>
<path d="M10.6,10 L12.6,10.4 M10.6,11.8 L12.6,12.2 M10.6,13.4 L12,13.7" stroke="#7a52b6" stroke-width="0.6"/>
</g><path d="M330.2,193.9 H336.2 L333.2,196.9 Z" fill="#505050"/><path d="M702,194.0 H708 L705,197.0 Z" fill="#505050"/><path d="M226,313.7 H232 L229,316.7 Z" fill="#505050"/><path d="M265.2,337.9 H271.2 L268.2,340.9 Z" fill="#505050"/><rect x="279" y="338.5" width="1.6" height="1.6" fill="#505050"/><rect x="282" y="338.5" width="1.6" height="1.6" fill="#505050"/><rect x="285" y="338.5" width="1.6" height="1.6" fill="#505050"/><g transform="translate(695.6,238.6)">
<path d="M10.6,3 C10.8,7 7.4,10.6 3.2,11.4" fill="none" stroke="#9c9c9c" stroke-width="2.6" stroke-linecap="round"/>
<path d="M7.6,2.4 L11.8,0.4 L13.2,3.2 L10.4,5 Z" fill="#9c9c9c" stroke="#9c9c9c" stroke-width="0.6" stroke-linejoin="round"/>
<path d="M0.6,10.6 L3.4,8.4 L5.4,11.4 L2.4,13.2 Z" fill="#9c9c9c" stroke="#9c9c9c" stroke-width="0.6" stroke-linejoin="round"/>
<path d="M9.6,1.6 L12.4,3.6" stroke="#c4c4c4" stroke-width="0.6"/>
</g><g transform="translate(695.6,264.6)">
<path d="M10.6,3 C10.8,7 7.4,10.6 3.2,11.4" fill="none" stroke="#9c9c9c" stroke-width="2.6" stroke-linecap="round"/>
<path d="M7.6,2.4 L11.8,0.4 L13.2,3.2 L10.4,5 Z" fill="#9c9c9c" stroke="#9c9c9c" stroke-width="0.6" stroke-linejoin="round"/>
<path d="M0.6,10.6 L3.4,8.4 L5.4,11.4 L2.4,13.2 Z" fill="#9c9c9c" stroke="#9c9c9c" stroke-width="0.6" stroke-linejoin="round"/>
<path d="M9.6,1.6 L12.4,3.6" stroke="#c4c4c4" stroke-width="0.6"/>
</g><g transform="translate(695.6,290.6)">
<path d="M10.6,3 C10.8,7 7.4,10.6 3.2,11.4" fill="none" stroke="#9c9c9c" stroke-width="2.6" stroke-linecap="round"/>
<path d="M7.6,2.4 L11.8,0.4 L13.2,3.2 L10.4,5 Z" fill="#9c9c9c" stroke="#9c9c9c" stroke-width="0.6" stroke-linejoin="round"/>
<path d="M0.6,10.6 L3.4,8.4 L5.4,11.4 L2.4,13.2 Z" fill="#9c9c9c" stroke="#9c9c9c" stroke-width="0.6" stroke-linejoin="round"/>
<path d="M9.6,1.6 L12.4,3.6" stroke="#c4c4c4" stroke-width="0.6"/>
</g><g transform="translate(432,357)">
<path d="M4,5.6 L10,0.6 L15.4,5 L15.4,12.4 L4,12.4 Z" fill="#eef3fb" stroke="#6f88b4" stroke-width="0.8"/>
<path d="M4,5.6 L9.8,9 L15.4,5" fill="none" stroke="#8fa6c8" stroke-width="0.7"/>
<path d="M4.2,12.2 L9.8,9 L15.2,12.2" fill="#cfdbf0" stroke="#8fa6c8" stroke-width="0.5"/>
<rect x="12" y="5.6" width="2.2" height="2" fill="#e23a2a"/>
<path d="M0.5,5.6 H6 L8.4,8 V14.6 H0.5 Z" fill="#f4f7fd" stroke="#3f5f96" stroke-width="0.9"/>
<path d="M6,5.6 V8 H8.4" fill="none" stroke="#5b78a8" stroke-width="0.7"/>
<path d="M2,9.4 H6.8 M2,11.2 H6.8 M2,13 H6.8" stroke="#6f97d8" stroke-width="0.8"/>
</g><g transform="translate(433,384)">
<rect x="9.8" y="0.4" width="2" height="4.4" fill="#8f1d1d"/>
<path d="M2,7 L7,2.6 L12,7 V13.6 H2 Z" fill="#f4f6fb" stroke="#1e2c4a" stroke-width="1.1"/>
<path d="M0.4,7.4 L7,1.2 L13.6,7.4" fill="none" stroke="#3a2a0a" stroke-width="2.4"/>
<path d="M0.6,7.2 L7,1.4 L13.4,7.2" fill="none" stroke="#f0b429" stroke-width="1.3"/>
<rect x="5.6" y="8.6" width="2.8" height="4.8" fill="#e8ae22" stroke="#a87408" stroke-width="0.4"/>
</g><path d="M151.1,418.5 L156.6,429.2 H145.6 Z" fill="#fff500" stroke="#151500" stroke-width="1.1" stroke-linejoin="round"/>
<rect x="150.5" y="421.8" width="1.3" height="4" fill="#111"/><rect x="150.5" y="426.6" width="1.3" height="1.3" fill="#111"/><path d="M11.2,471.4 H21.4 L17.4,475.6 V479.4 L15.2,479.4 V475.6 Z" fill="#555"/><path d="M9,499 L12,502.8 L9,506.6 L10.6,507.8 L13.2,504.4 L15.8,507.8 L17.6,506.6 L14.6,502.8 L17.6,499 L15.8,498 L13.2,501.2 L10.6,498 Z" fill="#e11414" stroke="#e11414" stroke-width="0.8" stroke-linejoin="round"/><path d="M28.4,499.4 V507.6 L31.2,503.5 Z" fill="#6a6a6a"/><rect x="47.6" y="498.5" width="8.2" height="8" fill="#e6edfa" stroke="#5a5e66" stroke-width="1.2"/><path d="M49.4,502.5 H54 M51.7,500.3 V504.7" stroke="#3c4048" stroke-width="1.1"/><polygon points="20.80,530.20 18.05,530.97 19.45,533.45 16.97,532.05 16.20,534.80 15.43,532.05 12.95,533.45 14.35,530.97 11.60,530.20 14.35,529.43 12.95,526.95 15.43,528.35 16.20,525.60 16.97,528.35 19.45,526.95 18.05,529.43" fill="#f0862a"/><path d="M823.6,452 L827.7,447.4 L831.8,452 Z" fill="#666"/><rect x="1152.5" y="468.5" width="13" height="13" fill="#fff" stroke="#a6a6a6"/><rect x="1156" y="472" width="6" height="6" fill="#737373"/><rect x="1152.5" y="523.5" width="13" height="13" fill="#fff" stroke="#a6a6a6"/><rect x="1156" y="527" width="6" height="6" fill="#737373"/><rect x="1233.5" y="468.5" width="13" height="13" fill="#fff" stroke="#a6a6a6"/><rect x="1237" y="472" width="6" height="6" fill="#737373"/><rect x="1233.5" y="523.5" width="13" height="13" fill="#fff" stroke="#a6a6a6"/><rect x="1237" y="527" width="6" height="6" fill="#737373"/><rect x="1307.0" y="468.5" width="13" height="13" fill="#fff" stroke="#a6a6a6"/><rect x="1310.5" y="472" width="6" height="6" fill="#737373"/><rect x="1307.0" y="523.5" width="13" height="13" fill="#fff" stroke="#a6a6a6"/><rect x="1310.5" y="527" width="6" height="6" fill="#737373"/><rect x="1378.5" y="468.5" width="13" height="13" fill="#fff" stroke="#a6a6a6"/><rect x="1382" y="472" width="6" height="6" fill="#737373"/><rect x="1378.5" y="523.5" width="13" height="13" fill="#fff" stroke="#a6a6a6"/><rect x="1382" y="527" width="6" height="6" fill="#737373"/><rect x="1439.5" y="468.5" width="13" height="13" fill="#fff" stroke="#a6a6a6"/><rect x="1443" y="472" width="6" height="6" fill="#737373"/><rect x="1439.5" y="523.5" width="13" height="13" fill="#fff" stroke="#a6a6a6"/><rect x="1443" y="527" width="6" height="6" fill="#737373"/><rect x="1152.5" y="496.5" width="13" height="13" fill="#fff" stroke="#a6a6a6"/><rect x="1233.5" y="496.5" width="13" height="13" fill="#fff" stroke="#a6a6a6"/><rect x="1307.0" y="496.5" width="13" height="13" fill="#fff" stroke="#a6a6a6"/><path d="M1310.1,503.2 L1312.5,505.8 L1317.1,500.2" fill="none" stroke="#6e6e6e" stroke-width="1.2"/><rect x="1378.5" y="496.5" width="13" height="13" fill="#fff" stroke="#a6a6a6"/><rect x="1439.5" y="496.5" width="13" height="13" fill="#fff" stroke="#a6a6a6"/><path d="M1442.6,503.2 L1445,505.8 L1449.6,500.2" fill="none" stroke="#6e6e6e" stroke-width="1.2"/></svg>
<div class="a t" style="left:72px;top:37.00px;height:16px;line-height:16px;font-size:11px;color:#ffffff;letter-spacing:-0.298px;">KMO-beheer</div>
<div class="a t" style="left:158px;top:37.00px;height:16px;line-height:16px;font-size:11px;color:#ffffff;letter-spacing:-0.294px;">Boekhouding</div>
<div class="a t" style="left:245px;top:37.00px;height:16px;line-height:16px;font-size:11px;color:#ffffff;letter-spacing:-0.076px;">Kantoor</div>
<div class="a t" style="left:309px;top:37.00px;height:16px;line-height:16px;font-size:11px;color:#ffffff;letter-spacing:-0.406px;">Fiscaal</div>
<div class="a t" style="left:367px;top:37.00px;height:16px;line-height:16px;font-size:11px;color:#ffffff;letter-spacing:-0.186px;">Parameters</div>
<div class="a t" style="left:448px;top:37.00px;height:16px;line-height:16px;font-size:11px;color:#ffffff;letter-spacing:0.080px;">Importeren</div>
<div class="a t" style="left:528px;top:37.00px;height:16px;line-height:16px;font-size:11px;color:#ffffff;letter-spacing:-0.157px;">Systeembeheer</div>
<div class="a t" style="left:629px;top:37.00px;height:16px;line-height:16px;font-size:11px;color:#ffffff;letter-spacing:0.239px;">Integraties</div>
<div class="a t" style="left:708px;top:37.00px;height:16px;line-height:16px;font-size:11px;color:#1e1e1e;letter-spacing:-0.219px;">Relaties</div>
<div class="a t" style="left:1166px;top:8.00px;height:16px;line-height:16px;font-size:11px;color:#ffffff;letter-spacing:-0.219px;">Adsolut - KANTOOR (Kantoor) - BE0000000097</div>
<div class="a t" style="left:28px;top:66.00px;height:16px;line-height:16px;font-size:11px;color:#161616;letter-spacing:-0.316px;">Nieuw</div>
<div class="a t" style="left:28px;top:91.00px;height:16px;line-height:16px;font-size:11px;color:#161616;letter-spacing:-0.283px;">Opslaan</div>
<div class="a t" style="left:28px;top:116.00px;height:16px;line-height:16px;font-size:11px;color:#161616;letter-spacing:-0.028px;">Verwijder</div>
<div class="a t" style="left:200px;top:66.00px;height:16px;line-height:16px;font-size:11px;color:#161616;letter-spacing:-0.224px;">Maak ongedaan</div>
<div class="a t" style="left:200px;top:91.00px;height:16px;line-height:16px;font-size:11px;color:#161616;letter-spacing:-0.086px;">Vernieuw lijst</div>
<div class="a t" style="left:200px;top:116.00px;height:16px;line-height:16px;font-size:11px;color:#161616;letter-spacing:-0.200px;">Historiek</div>
<div class="a t" style="left:314px;top:74.00px;height:16px;line-height:16px;font-size:11px;color:#161616;letter-spacing:-0.012px;">Weergave (F2)</div>
<div class="a t" style="left:314px;top:107.00px;height:16px;line-height:16px;font-size:11px;color:#161616;letter-spacing:0.089px;">TabStop</div>
<div class="a t" style="left:419px;top:103.00px;height:16px;line-height:16px;font-size:11px;color:#161616;letter-spacing:-0.056px;">Klantencontact</div>
<div class="a t" style="left:508px;top:103.00px;height:16px;line-height:16px;font-size:11px;color:#161616;letter-spacing:-0.237px;">Documenten</div>
<div class="a t" style="left:609px;top:103.00px;height:16px;line-height:16px;font-size:11px;color:#161616;letter-spacing:0.339px;">Acties</div>
<div class="a t" style="left:703px;top:66.00px;height:16px;line-height:16px;font-size:11px;color:#161616;letter-spacing:-0.042px;">Grootboek</div>
<div class="a t" style="left:703px;top:91.00px;height:16px;line-height:16px;font-size:11px;color:#161616;letter-spacing:-0.089px;">Historiek</div>
<div class="a t" style="left:703px;top:116.00px;height:16px;line-height:16px;font-size:11px;color:#161616;letter-spacing:-0.060px;">Vervaldagboek</div>
<div class="a t" style="left:803px;top:66.00px;height:16px;line-height:16px;font-size:11px;color:#161616;letter-spacing:-0.172px;">Aanmaningen</div>
<div class="a t" style="left:803px;top:91.00px;height:16px;line-height:16px;font-size:11px;color:#161616;letter-spacing:-0.002px;">Afdruk relatiefiche</div>
<div class="a t" style="left:803px;top:116.00px;height:16px;line-height:16px;font-size:11px;color:#161616;letter-spacing:0.086px;">Etiket (Ctrl+Shift+P)</div>
<div class="a t" style="left:920px;top:74.00px;height:16px;line-height:16px;font-size:11px;color:#161616;letter-spacing:-0.020px;">Afpunten (F8)</div>
<div class="a t" style="left:920px;top:107.00px;height:16px;line-height:16px;font-size:11px;color:#161616;letter-spacing:-0.042px;">Ontpunten (F9)</div>
<div class="a t" style="left:1032px;top:66.00px;height:16px;line-height:16px;font-size:11px;color:#161616;letter-spacing:-0.121px;">Lees Eid (Ctrl+E)</div>
<div class="a t" style="left:1032px;top:91.00px;height:16px;line-height:16px;font-size:11px;color:#161616;letter-spacing:-0.072px;">Kruispuntbank (Ctrl+K)</div>
<div class="a t" style="left:1032px;top:116.00px;height:16px;line-height:16px;font-size:11px;color:#161616;letter-spacing:0.040px;">Staatsblad (Ctrl+B)</div>
<div class="a t" style="left:1171px;top:66.00px;height:16px;line-height:16px;font-size:11px;color:#161616;letter-spacing:0.008px;">Wegbeschrijving (Ctrl+W)</div>
<div class="a t" style="left:1171px;top:91.00px;height:16px;line-height:16px;font-size:11px;color:#161616;letter-spacing:-0.166px;">Maak afspraak</div>
<div class="a t" style="left:1171px;top:116.00px;height:16px;line-height:16px;font-size:11px;color:#161616;letter-spacing:-0.238px;">Open communicator</div>
<div class="a t" style="left:1325px;top:66.00px;height:16px;line-height:16px;font-size:11px;color:#161616;letter-spacing:-0.021px;">Open support ticket</div>
<div class="a t" style="left:1325px;top:91.00px;height:16px;line-height:16px;font-size:11px;color:#161616;letter-spacing:0.087px;">Maak offerte</div>
<div class="a t" style="left:1325px;top:116.00px;height:16px;line-height:16px;font-size:11px;color:#161616;letter-spacing:-0.164px;">Maak order</div>
<div class="a t" style="left:1449px;top:74.00px;height:16px;line-height:16px;font-size:11px;color:#161616;letter-spacing:0.015px;">Maak verkoopfactuur</div>
<div class="a t" style="left:1449px;top:107.00px;height:16px;line-height:16px;font-size:11px;color:#161616;letter-spacing:0.070px;">Maak contract</div>
<div class="a t" style="left:222px;top:141.00px;height:16px;line-height:16px;font-size:11px;color:#2a2a2a;letter-spacing:-0.003px;">Data acties</div>
<div class="a t" style="left:510px;top:141.00px;height:16px;line-height:16px;font-size:11px;color:#2a2a2a;letter-spacing:-0.301px;">Document...</div>
<div class="a t" style="left:592px;top:141.00px;height:16px;line-height:16px;font-size:11px;color:#2a2a2a;letter-spacing:-0.350px;">CompanyWeb</div>
<div class="a t" style="left:768px;top:141.00px;height:16px;line-height:16px;font-size:11px;color:#2a2a2a;letter-spacing:-0.059px;">Afdrukken</div>
<div class="a t" style="left:928px;top:141.00px;height:16px;line-height:16px;font-size:11px;color:#2a2a2a;letter-spacing:-0.065px;">Afpuntingen</div>
<div class="a t" style="left:1259px;top:141.00px;height:16px;line-height:16px;font-size:11px;color:#2a2a2a;letter-spacing:-0.328px;">Acties</div>
<div class="a t" style="left:8px;top:163.00px;height:16px;line-height:16px;font-size:11px;color:#1e1e1e;letter-spacing:-0.219px;">Relaties</div>
<div class="a t" style="left:4px;top:187.00px;height:16px;line-height:16px;font-size:11px;color:#161616;letter-spacing:-0.287px;">Aanspreking</div>
<div class="a t" style="left:4px;top:211.00px;height:16px;line-height:16px;font-size:11px;color:#161616;letter-spacing:-0.086px;">Naam</div>
<div class="a t" style="left:4px;top:235.00px;height:16px;line-height:16px;font-size:11px;color:#161616;letter-spacing:-0.200px;transform:scaleX(0.9573);transform-origin:0 50%;">Roepnaam</div>
<div class="a t" style="left:4px;top:259.00px;height:16px;line-height:16px;font-size:11px;color:#161616;letter-spacing:-0.060px;">Straat</div>
<div class="a t" style="left:4px;top:283.00px;height:16px;line-height:16px;font-size:11px;color:#161616;letter-spacing:-0.132px;">Adres 2</div>
<div class="a t" style="left:4px;top:307.00px;height:16px;line-height:16px;font-size:11px;color:#161616;letter-spacing:-0.200px;transform:scaleX(0.9289);transform-origin:0 50%;">Land</div>
<div class="a t" style="left:4px;top:331.00px;height:16px;line-height:16px;font-size:11px;color:#161616;letter-spacing:-0.422px;">Gemeente</div>
<div class="a t" style="left:4px;top:355.00px;height:16px;line-height:16px;font-size:11px;color:#161616;letter-spacing:-0.200px;transform:scaleX(0.9051);transform-origin:0 50%;">Email</div>
<div class="a t" style="left:4px;top:381.00px;height:16px;line-height:16px;font-size:11px;color:#161616;letter-spacing:-0.354px;">Url</div>
<div class="a t" style="left:35px;top:213.00px;height:16px;line-height:16px;font-size:17px;color:#f01010;letter-spacing:0.000px;font-weight:bold;">*</div>
<div class="a t" style="left:94px;top:211.00px;height:16px;line-height:16px;font-size:11px;color:#161616;letter-spacing:-0.144px;">Ellen&#x27;s Testcenter NV</div>
<div class="a t" style="left:94px;top:259.00px;height:16px;line-height:16px;font-size:11px;color:#161616;letter-spacing:-0.025px;">Stationstraat 18 B</div>
<div class="a t" style="left:94px;top:307.00px;height:16px;line-height:16px;font-size:11px;color:#161616;letter-spacing:-0.430px;">België</div>
<div class="a t" style="left:94px;top:331.00px;height:16px;line-height:16px;font-size:11px;color:#161616;letter-spacing:-0.220px;">Ramsel (Herselt)</div>
<div class="a t" style="left:300px;top:331.00px;height:16px;line-height:16px;font-size:11px;color:#161616;letter-spacing:-0.371px;">2230</div>
<div class="a t" style="left:94px;top:357.00px;height:16px;line-height:16px;font-size:11px;color:#3b78c6;letter-spacing:-0.142px;">ellen@wolterskluwer.com</div>
<div class="a t" style="left:464px;top:187.00px;height:16px;line-height:16px;font-size:11px;color:#161616;letter-spacing:-0.041px;">Klant / Prospect</div>
<div class="a t" style="left:464px;top:211.00px;height:16px;line-height:16px;font-size:11px;color:#161616;letter-spacing:-0.046px;">Oud relatienr</div>
<div class="a t" style="left:464px;top:235.00px;height:16px;line-height:16px;font-size:11px;color:#161616;letter-spacing:0.051px;">Telefoon</div>
<div class="a t" style="left:464px;top:261.00px;height:16px;line-height:16px;font-size:11px;color:#161616;letter-spacing:0.163px;">Telefax</div>
<div class="a t" style="left:464px;top:287.00px;height:16px;line-height:16px;font-size:11px;color:#161616;letter-spacing:-0.200px;transform:scaleX(0.9278);transform-origin:0 50%;">Gsm</div>
<div class="a t" style="left:555px;top:187.00px;height:16px;line-height:16px;font-size:11px;color:#161616;letter-spacing:-0.016px;">Klant</div>
<div class="a t" style="left:555px;top:237.00px;height:16px;line-height:16px;font-size:11px;color:#161616;letter-spacing:-0.118px;">015000000</div>
<div class="a t" style="left:729px;top:199.00px;height:16px;line-height:16px;font-size:11px;color:#161616;letter-spacing:-0.200px;transform:scaleX(0.9413);transform-origin:0 50%;">Code</div>
<div class="a t" style="left:729px;top:233.00px;height:16px;line-height:16px;font-size:11px;color:#161616;letter-spacing:-0.095px;">Omzet actief boekjaar</div>
<div class="a t" style="left:729px;top:257.00px;height:16px;line-height:16px;font-size:11px;color:#161616;letter-spacing:-0.049px;">Btw actief boekjaar</div>
<div class="a t" style="left:729px;top:281.00px;height:16px;line-height:16px;font-size:11px;color:#161616;letter-spacing:-0.130px;">Saldo actief boekjaar</div>
<div class="a t" style="left:729px;top:305.00px;height:16px;line-height:16px;font-size:11px;color:#161616;letter-spacing:-0.074px;">Vervallen actief boekjaar</div>
<div class="a t" style="left:729px;top:329.00px;height:16px;line-height:16px;font-size:11px;color:#161616;letter-spacing:-0.190px;">Gem. betalingstermijn</div>
<div class="a t" style="left:729px;top:353.00px;height:16px;line-height:16px;font-size:11px;color:#161616;letter-spacing:-0.045px;">Max. betalingstermijn</div>
<div class="a t" style="left:757px;top:200.00px;height:16px;line-height:16px;font-size:17px;color:#f01010;letter-spacing:0.000px;font-weight:bold;">*</div>
<div class="a t" style="left:940px;top:233.00px;height:16px;line-height:16px;font-size:11px;color:#161616;letter-spacing:0.146px;">3.200,00</div>
<div class="a t" style="left:949px;top:257.00px;height:16px;line-height:16px;font-size:11px;color:#161616;letter-spacing:0.224px;">672,00</div>
<div class="a t" style="left:940px;top:281.00px;height:16px;line-height:16px;font-size:11px;color:#161616;letter-spacing:0.146px;">9.922,00</div>
<div class="a t" style="left:940px;top:305.00px;height:16px;line-height:16px;font-size:11px;color:#161616;letter-spacing:0.146px;">9.922,00</div>
<div class="a t" style="left:977px;top:329.00px;height:16px;line-height:16px;font-size:11px;color:#161616;letter-spacing:0.000px;">0</div>
<div class="a t" style="left:977px;top:353.00px;height:16px;line-height:16px;font-size:11px;color:#161616;letter-spacing:0.000px;">0</div>
<div class="a t" style="left:864px;top:199.00px;height:16px;line-height:16px;font-size:11px;color:#161616;letter-spacing:0.047px;">100002</div>
<div class="a t" style="left:9px;top:418.00px;height:16px;line-height:16px;font-size:11px;color:#161616;letter-spacing:-0.278px;">Basisgegevens</div>
<div class="a t" style="left:101px;top:418.00px;height:16px;line-height:16px;font-size:11px;color:#161616;letter-spacing:-0.200px;transform:scaleX(0.9402);transform-origin:0 50%;">CRM</div>
<div class="a t" style="left:263px;top:418.00px;height:16px;line-height:16px;font-size:11px;color:#161616;letter-spacing:-0.205px;">Verzending</div>
<div class="a t" style="left:336px;top:418.00px;height:16px;line-height:16px;font-size:11px;color:#161616;letter-spacing:0.039px;">Uren</div>
<div class="a t" style="left:381px;top:418.00px;height:16px;line-height:16px;font-size:11px;color:#161616;letter-spacing:-0.156px;">Agenda</div>
<div class="a t" style="left:439px;top:418.00px;height:16px;line-height:16px;font-size:11px;color:#161616;letter-spacing:0.059px;">Overzicht</div>
<div class="a t" style="left:506px;top:418.00px;height:16px;line-height:16px;font-size:11px;color:#161616;letter-spacing:-0.172px;">Aanmaningen</div>
<div class="a t" style="left:592px;top:418.00px;height:16px;line-height:16px;font-size:11px;color:#161616;letter-spacing:-0.144px;">Standaardboeking</div>
<div class="a t" style="left:700px;top:418.00px;height:16px;line-height:16px;font-size:11px;color:#161616;letter-spacing:-0.100px;">Kortingen / Prijzen</div>
<div class="a t" style="left:809px;top:418.00px;height:16px;line-height:16px;font-size:11px;color:#161616;letter-spacing:-0.200px;">Historiek</div>
<div class="a t" style="left:871px;top:418.00px;height:16px;line-height:16px;font-size:11px;color:#161616;letter-spacing:-0.072px;">Taken</div>
<div class="a t" style="left:921px;top:418.00px;height:16px;line-height:16px;font-size:11px;color:#161616;letter-spacing:-0.073px;">Interne memo</div>
<div class="a t" style="left:1009px;top:418.00px;height:16px;line-height:16px;font-size:11px;color:#161616;letter-spacing:0.019px;">Contracten</div>
<div class="a t" style="left:1084px;top:418.00px;height:16px;line-height:16px;font-size:11px;color:#161616;letter-spacing:-0.064px;">Klantenkaart</div>
<div class="a t" style="left:1166px;top:418.00px;height:16px;line-height:16px;font-size:11px;color:#161616;letter-spacing:-0.294px;">Communicator</div>
<div class="a t" style="left:160px;top:417.00px;height:16px;line-height:16px;font-size:11px;color:#161616;letter-spacing:-0.119px;">Contactpersonen</div>
<div class="a t" style="left:44px;top:442.00px;height:16px;line-height:16px;font-size:11px;color:#6e6e6e;letter-spacing:-0.269px;">Gewijzigd door</div>
<div class="a t" style="left:129px;top:442.00px;height:16px;line-height:16px;font-size:11px;color:#6e6e6e;letter-spacing:-0.332px;">Gewijzigd op</div>
<div class="a t" style="left:239px;top:442.00px;height:16px;line-height:16px;font-size:11px;color:#6e6e6e;letter-spacing:-0.287px;">Aanspreking</div>
<div class="a t" style="left:324px;top:442.00px;height:16px;line-height:16px;font-size:11px;color:#6e6e6e;letter-spacing:-0.200px;transform:scaleX(0.9544);transform-origin:0 50%;">Familienaam</div>
<div class="a t" style="left:392px;top:442.00px;height:16px;line-height:16px;font-size:11px;color:#6e6e6e;letter-spacing:-0.395px;">Voornaam</div>
<div class="a t" style="left:460px;top:442.00px;height:16px;line-height:16px;font-size:11px;color:#6e6e6e;letter-spacing:-0.327px;">Functienaam</div>
<div class="a t" style="left:599px;top:442.00px;height:16px;line-height:16px;font-size:11px;color:#6e6e6e;letter-spacing:-0.074px;">Telefoon</div>
<div class="a t" style="left:679px;top:442.00px;height:16px;line-height:16px;font-size:11px;color:#6e6e6e;letter-spacing:-0.200px;transform:scaleX(0.8836);transform-origin:0 50%;">Gsm</div>
<div class="a t" style="left:760px;top:442.00px;height:16px;line-height:16px;font-size:11px;color:#6e6e6e;letter-spacing:0.107px;">Straat</div>
<div class="a t" style="left:843px;top:442.00px;height:16px;line-height:16px;font-size:11px;color:#6e6e6e;letter-spacing:-0.200px;transform:scaleX(0.9289);transform-origin:0 50%;">Land</div>
<div class="a t" style="left:887px;top:442.00px;height:16px;line-height:16px;font-size:11px;color:#6e6e6e;letter-spacing:-0.422px;">Gemeente</div>
<div class="a t" style="left:962px;top:442.00px;height:16px;line-height:16px;font-size:11px;color:#6e6e6e;letter-spacing:-0.200px;transform:scaleX(0.9428);transform-origin:0 50%;">Email</div>
<div class="a t" style="left:1120px;top:442.00px;height:16px;line-height:16px;font-size:11px;color:#6e6e6e;letter-spacing:-0.359px;">Communicatie</div>
<div class="a t" style="left:1206px;top:442.00px;height:16px;line-height:16px;font-size:11px;color:#6e6e6e;letter-spacing:-0.049px;">Orderbeves...</div>
<div class="a t" style="left:1282px;top:442.00px;height:16px;line-height:16px;font-size:11px;color:#6e6e6e;letter-spacing:-0.236px;">Aanmaning...</div>
<div class="a t" style="left:1353px;top:442.00px;height:16px;line-height:16px;font-size:11px;color:#6e6e6e;letter-spacing:-0.076px;">Mail facturen</div>
<div class="a t" style="left:1425px;top:442.00px;height:16px;line-height:16px;font-size:11px;color:#6e6e6e;letter-spacing:0.081px;">Actief</div>
<div class="a t" style="left:44px;top:467.00px;height:16px;line-height:16px;font-size:11px;color:#808080;letter-spacing:-0.100px;">Filter gewijzig...</div>
<div class="a t" style="left:129px;top:467.00px;height:16px;line-height:16px;font-size:11px;color:#808080;letter-spacing:-0.160px;">Filter gewijzigd op</div>
<div class="a t" style="left:239px;top:467.00px;height:16px;line-height:16px;font-size:11px;color:#808080;letter-spacing:-0.084px;">Filter aanspre...</div>
<div class="a t" style="left:324px;top:467.00px;height:16px;line-height:16px;font-size:11px;color:#808080;letter-spacing:-0.209px;">Filter famili...</div>
<div class="a t" style="left:392px;top:467.00px;height:16px;line-height:16px;font-size:11px;color:#808080;letter-spacing:-0.033px;">Filter voor...</div>
<div class="a t" style="left:460px;top:467.00px;height:16px;line-height:16px;font-size:11px;color:#808080;letter-spacing:-0.080px;">Filter functienaam</div>
<div class="a t" style="left:599px;top:467.00px;height:16px;line-height:16px;font-size:11px;color:#808080;letter-spacing:-0.044px;">Filter telefoon</div>
<div class="a t" style="left:679px;top:467.00px;height:16px;line-height:16px;font-size:11px;color:#808080;letter-spacing:-0.128px;">Filter gsm</div>
<div class="a t" style="left:760px;top:467.00px;height:16px;line-height:16px;font-size:11px;color:#808080;letter-spacing:0.076px;">Filter straat</div>
<div class="a t" style="left:843px;top:467.00px;height:16px;line-height:16px;font-size:11px;color:#808080;letter-spacing:-0.167px;">Filter ...</div>
<div class="a t" style="left:887px;top:467.00px;height:16px;line-height:16px;font-size:11px;color:#808080;letter-spacing:-0.228px;">Filter geme...</div>
<div class="a t" style="left:962px;top:467.00px;height:16px;line-height:16px;font-size:11px;color:#808080;letter-spacing:-0.233px;">Filter email</div>
<div class="a t" style="left:66px;top:495.00px;height:16px;line-height:16px;font-size:11px;color:#161616;letter-spacing:-0.200px;transform:scaleX(0.8860);transform-origin:0 50%;">ELLEN</div>
<div class="a t" style="left:129px;top:495.00px;height:16px;line-height:16px;font-size:11px;color:#161616;letter-spacing:0.085px;">22/06/2022 12:48</div>
<div class="a t" style="left:324px;top:495.00px;height:16px;line-height:16px;font-size:11px;color:#161616;letter-spacing:-0.130px;">Vankeerbe...</div>
<div class="a t" style="left:392px;top:495.00px;height:16px;line-height:16px;font-size:11px;color:#161616;letter-spacing:-0.200px;transform:scaleX(0.8948);transform-origin:0 50%;">Ellen</div>
<div class="a t" style="left:460px;top:495.00px;height:16px;line-height:16px;font-size:11px;color:#161616;letter-spacing:-0.098px;">Bestuurder - Zaakvoerder</div>
<div class="a t" style="left:843px;top:495.00px;height:16px;line-height:16px;font-size:11px;color:#161616;letter-spacing:-0.430px;">België</div>
<div class="a t" style="left:887px;top:495.00px;height:16px;line-height:16px;font-size:11px;color:#161616;letter-spacing:-0.406px;">Herselt</div>
<div class="a t" style="left:962px;top:495.00px;height:16px;line-height:16px;font-size:11px;color:#161616;letter-spacing:-0.142px;text-decoration:underline;">ellen@wolterskluwer.com</div>
</body></html>
